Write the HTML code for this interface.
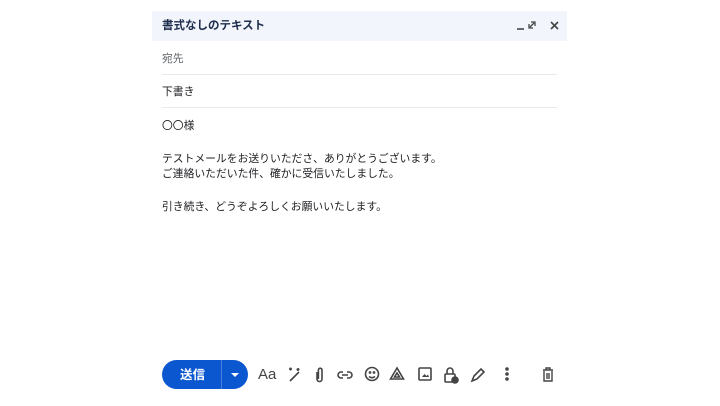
<!DOCTYPE html>
<html><head><meta charset="utf-8"><style>
body{margin:0;width:720px;height:406px;background:#fff;font-family:"Liberation Sans","Noto Sans CJK JP",sans-serif;position:relative;overflow:hidden}
.hdr{position:absolute;left:152px;top:11px;width:415px;height:30px;background:#f2f6fc}
.t{position:absolute;left:10px;top:6px;font-size:11.5px;font-weight:bold;color:#1f2d4d}
.a{position:absolute;font-size:10.8px;color:#202124;white-space:nowrap}
.ln{position:absolute;left:162px;width:395px;height:1px;background:#e8eaed}
.btn{position:absolute;left:162px;top:360px;width:86px;height:29px;border-radius:15px;background:#0b57d0}
.ic{position:absolute;top:366px}
</style></head><body>
<div class="hdr"><div class="t">書式なしのテキスト</div>
<svg style="position:absolute;left:362px;top:8px" width="48" height="12" viewBox="0 0 48 12" fill="none" stroke="#444" stroke-width="1.6">
<path d="M3 10h7"/><path d="M20 4l-4 4M17 3h4v4M15 5v4h4" stroke-width="1.3"/><path d="M37 3l7 7M44 3l-7 7"/></svg></div>
<div class="a" style="left:162px;top:50px;color:#5f6368">宛先</div>
<div class="ln" style="top:74px"></div>
<div class="a" style="left:162px;top:83px">下書き</div>
<div class="ln" style="top:107px"></div>
<div class="a" style="left:162px;top:117px">〇〇様</div>
<div class="a" style="left:162px;top:150px">テストメールをお送りいたださ、ありがとうございます。</div>
<div class="a" style="left:162px;top:165px">ご連絡いただいた件、確かに受信いたしました。</div>
<div class="a" style="left:162px;top:198px">引き続き、どうぞよろしくお願いいたします。</div>
<div class="btn"><div style="position:absolute;left:59px;top:0;width:1px;height:29px;background:#4a7fd8"></div>
<div style="position:absolute;left:18px;top:4px;color:#fff;font-size:12.5px;font-weight:bold">送信</div>
<div style="position:absolute;left:69px;top:13px;border:4px solid transparent;border-top:4px solid #fff;border-bottom:0"></div></div>
<div class="ic" style="left:258px;top:366px;font-size:15px;color:#444">Aa</div>
<svg class="ic" style="left:286px" width="280" height="18" viewBox="0 0 280 18" fill="none" stroke="#444" stroke-width="1.6">
<path d="M4 15l9-9M3 3h3M4.5 1.5v3M12 2v3M10.5 3.5h3"/>
<path d="M31 6v7a2.5 2.5 0 0 0 5 0V4a1.8 1.8 0 0 0-3.6 0v9"/>
<path d="M57 6h-2a3 3 0 0 0 0 6h2M61 6h2a3 3 0 0 1 0 6h-2M56 9h6"/>
<circle cx="86" cy="8" r="6.5"/><path d="M83 10.5q3 2.5 6 0"/><circle cx="84" cy="6.5" r=".6"/><circle cx="88" cy="6.5" r=".6"/>
<path d="M111 2l-6.5 11h13z"/><path d="M111 7l-2.5 4h5z"/>
<rect x="133" y="2" width="12" height="12" rx="1"/><path d="M136 11l2.5-3 2 2 1.5-1.5 1 2.5z" fill="#444" stroke="none"/>
<rect x="159" y="8" width="10" height="8" rx="1"/><path d="M161 8V5a3 3 0 0 1 6 0v3"/><circle cx="169" cy="14" r="3" fill="#444"/>
<path d="M186 15l2-5 7-7 3 3-7 7z"/>
<circle cx="221" cy="3" r="1" fill="#444"/><circle cx="221" cy="8" r="1" fill="#444"/><circle cx="221" cy="13" r="1" fill="#444"/>
<path d="M257 4h10M260 4V2h4v2M258 5v10h8V5M261 7v6M263 7v6" stroke-width="1.4"/>
</svg>
</body></html>
